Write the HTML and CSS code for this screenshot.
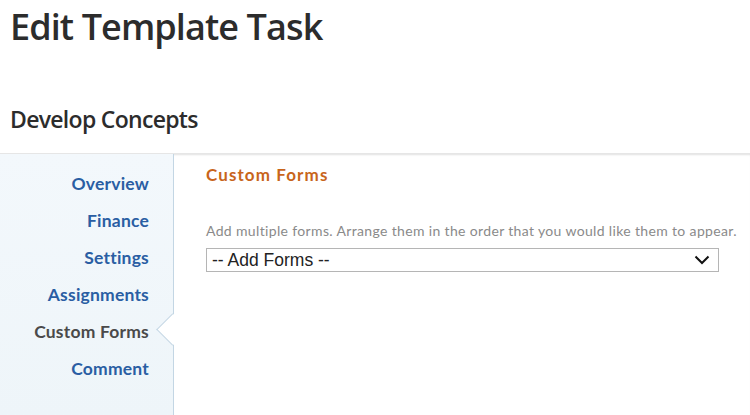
FILE: index.html
```html
<!DOCTYPE html>
<html>
<head>
<meta charset="utf-8">
<link rel="stylesheet" href="styles.css">
</head>
<body>
<header class="page-head">
  <h1 class="title">Edit Template Task</h1>
  <h2 class="subtitle">Develop Concepts</h2>
</header>
<div class="panel">
  <nav class="side">
    <a class="side-item">Overview</a>
    <a class="side-item">Finance</a>
    <a class="side-item">Settings</a>
    <a class="side-item">Assignments</a>
    <a class="side-item active">Custom Forms</a>
    <a class="side-item">Comment</a>
  </nav>
  <main class="content">
    <h3 class="section-title">Custom Forms</h3>
    <p class="hint">Add multiple forms. Arrange them in the order that you would like them to appear.</p>
    <div class="select">
      <span class="select-text">-- Add Forms --</span>
      <svg class="chev" width="16" height="10" viewBox="0 0 16 10"><path d="M1.5 1.5 L8 8 L14.5 1.5" fill="none" stroke="#111" stroke-width="2"/></svg>
    </div>
  </main>
</div>
</body>
</html>
```
FILE: styles.css
```css
html, body { margin: 0; padding: 0; background: #fff; }
body { width: 750px; height: 415px; overflow: hidden; font-family: "Open Sans", sans-serif; }
.page-head { padding: 0 0 0 10px; height: 153px; }
.title { margin: 0; padding-top: 5px; font-family: "Open Sans", sans-serif; font-weight: 600; font-size: 36px; line-height: 44px; color: #2c2c2c; letter-spacing: -0.9px; }
.subtitle { margin: 0; padding-top: 55px; font-family: "Open Sans", sans-serif; font-weight: 600; font-size: 23px; line-height: 30px; color: #2c2c2c; letter-spacing: -0.7px; }
.panel { display: flex; height: 262px; position: relative; box-shadow: inset 0 2px 2px -1px rgba(0,0,0,0.12); border-top: 1px solid #e6e6e6; }
.side { width: 174px; border-right: 1px solid #c3d6e4; background: linear-gradient(#f3f8fc, #eef5f9); display: flex; flex-direction: column; align-items: flex-end; padding: 19px 24px 0 0; box-sizing: border-box; gap: 15px; flex-shrink: 0; }
.side-item { font-family: "Lato", sans-serif; font-weight: 700; font-size: 17.5px; line-height: 22px; color: #2a5ea3; letter-spacing: 0.2px; position: relative; }
.side-item.active { color: #4a4a4a; }
.side-item.active::after { content: ""; position: absolute; right: -35px; top: -3px; width: 22px; height: 22px; background: #fff; border-left: 1px solid #c3d6e4; border-bottom: 1px solid #c3d6e4; transform: rotate(45deg); transform-origin: center; }
.content { padding: 10px 0 0 32px; flex: 1; }
.section-title { margin: 0; font-family: "Lato", sans-serif; font-weight: 700; font-size: 17px; line-height: 22px; color: #c8651b; letter-spacing: 1.1px; }
.hint { margin: 36px 0 0; font-family: "Lato", sans-serif; font-size: 14px; line-height: 18px; color: #8a8a8a; letter-spacing: 0.35px; }
.select { margin-top: 8px; width: 513px; height: 24px; border: 1px solid #b5b5b5; box-sizing: border-box; display: flex; align-items: center; justify-content: space-between; padding: 0 8px 0 5px; }
.select-text { font-family: "Liberation Sans", sans-serif; font-size: 17.5px; color: #222; }
.chev { display: block; }
```
